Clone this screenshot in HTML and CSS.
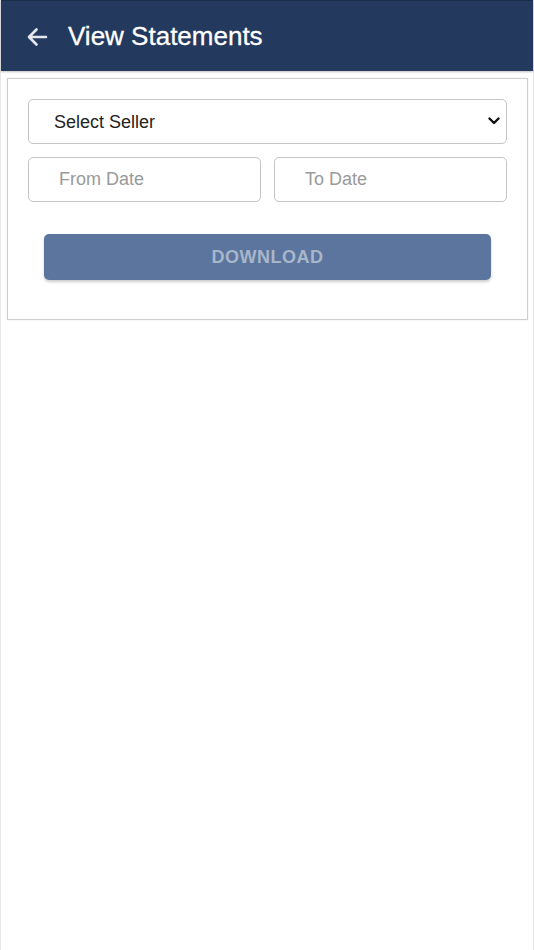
FILE: index.html
```html
<!DOCTYPE html>
<html lang="en">
<head>
<meta charset="utf-8">
<title>View Statements</title>
<link rel="stylesheet" href="styles.css">
</head>
<body>
<div class="page">
  <header class="topbar">
    <svg class="back" width="24" height="24" viewBox="0 0 24 24" aria-hidden="true">
      <path d="M21 12H4.5M11.5 4.5L4 12l7.5 7.5" fill="none" stroke="#e4e8ee" stroke-width="2.6" stroke-linecap="round" stroke-linejoin="round"/>
    </svg>
    <h1 class="title">View Statements</h1>
  </header>
  <section class="card">
    <div class="select-wrap">
      <select class="field select">
        <option>Select Seller</option>
      </select>
      <svg class="chev" width="12" height="8" viewBox="0 0 12 8" aria-hidden="true">
        <path d="M1.5 1.5L6 6l4.5-4.5" fill="none" stroke="#111" stroke-width="2.4" stroke-linecap="round" stroke-linejoin="round"/>
      </svg>
    </div>
    <div class="dates">
      <input class="field date from" type="text" placeholder="From Date">
      <input class="field date to" type="text" placeholder="To Date">
    </div>
    <button class="download" type="button">DOWNLOAD</button>
  </section>
</div>
</body>
</html>
```
FILE: styles.css
```css
html, body {
  margin: 0;
  padding: 0;
  background: #ffffff;
  font-family: "Liberation Sans", Arial, sans-serif;
}

.page {
  width: 534px;
  height: 950px;
  box-sizing: border-box;
  border-left: 1px solid #e8e8e8;
  border-right: 1px solid #e8e8e8;
  background: #ffffff;
}

.topbar {
  height: 71px;
  background: #233a5e;
  border-top: 1px solid #1a2d4a;
  box-sizing: border-box;
  display: flex;
  align-items: center;
  padding-left: 24px;
  box-shadow: 0 1px 2px rgba(0, 0, 0, 0.25);
}

.back {
  display: block;
  margin-top: 1px;
}

.title {
  margin: 0 0 0 19px;
  font-size: 26px;
  font-weight: normal;
  color: #ffffff;
  line-height: 1;
  -webkit-text-stroke: 0.3px #ffffff;
}

.card {
  margin: 7px 5px 0 6px;
  border: 1px solid #cfcfcf;
  box-shadow: 0 0 2px rgba(0, 0, 0, 0.08);
  padding: 20px 20px 39px 20px;
  display: flex;
  flex-direction: column;
}

.select-wrap {
  position: relative;
}

.field {
  box-sizing: border-box;
  height: 45px;
  border: 1px solid #c4c4c4;
  border-radius: 5px;
  background: #ffffff;
  font-family: "Liberation Sans", Arial, sans-serif;
  font-size: 18px;
  outline: none;
}

.select {
  width: 100%;
  -webkit-appearance: none;
  appearance: none;
  padding: 0 0 0 25px;
  color: #222222;
}

.chev {
  position: absolute;
  right: 7px;
  top: 18px;
}

.dates {
  display: flex;
  gap: 13px;
  margin-top: 13px;
}

.date {
  flex: 1 1 0;
  min-width: 0;
  padding: 0 0 0 30px;
  color: #333;
}

.date::placeholder {
  color: #9a9a9a;
}

.download {
  margin: 32px 16px 0 16px;
  height: 46px;
  border: none;
  border-radius: 5px;
  background: #5b759e;
  color: #a8b6ca;
  font-family: "Liberation Sans", Arial, sans-serif;
  font-size: 18px;
  font-weight: bold;
  letter-spacing: 0.5px;
  box-shadow: 0 2px 3px rgba(0, 0, 0, 0.2);
}
```
